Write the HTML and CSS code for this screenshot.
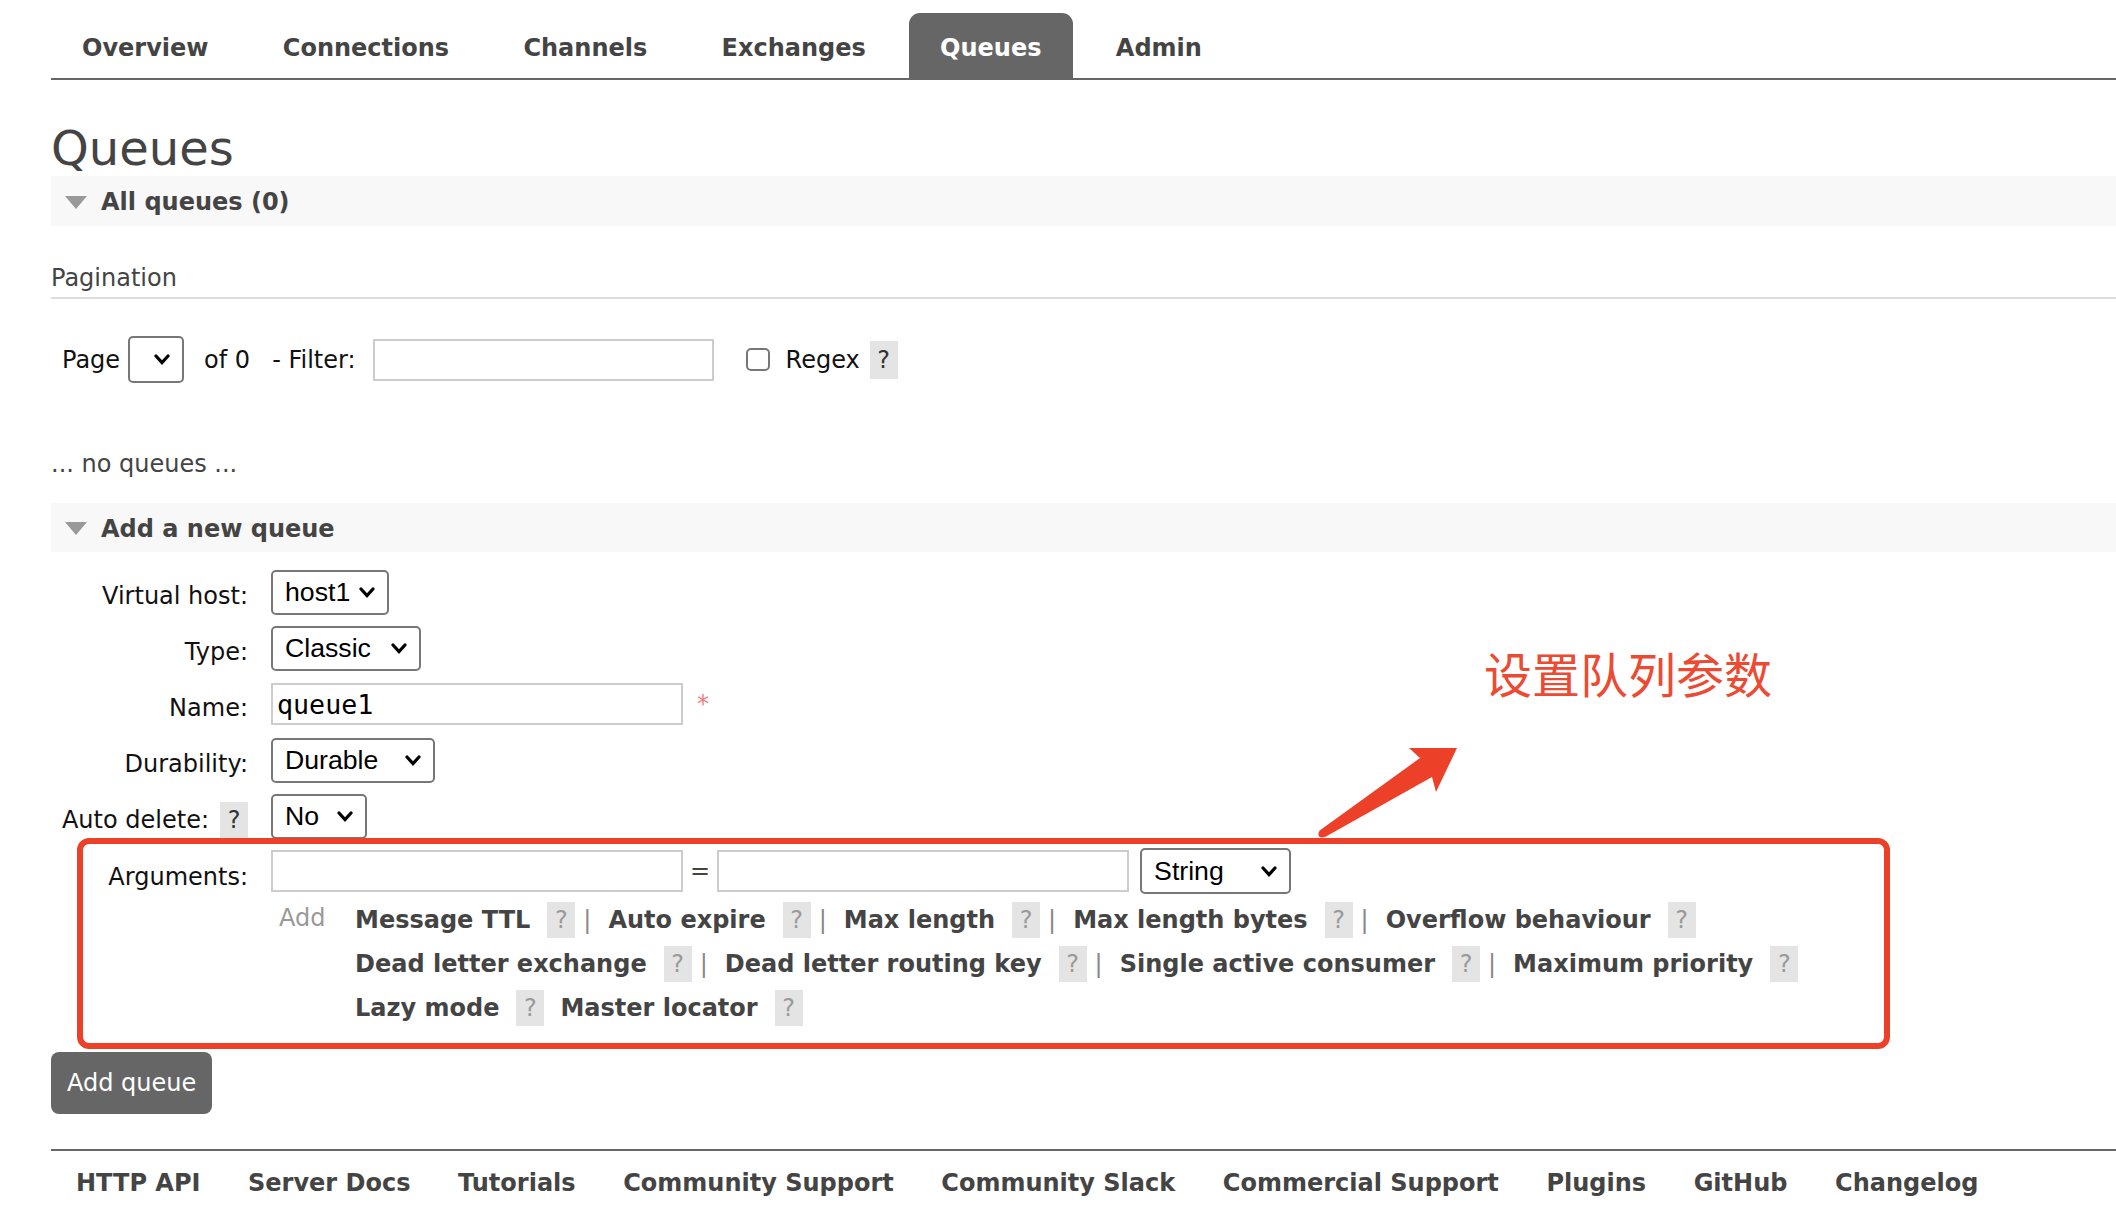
FILE: index.html
```html
<!DOCTYPE html>
<html lang="en">
<head>
<meta charset="utf-8">
<title>RabbitMQ Management - Queues</title>
<link rel="stylesheet" href="styles.css">
</head>
<body>
<div class="page">
  <nav class="menu">
    <ul>
      <li>Overview</li>
      <li>Connections</li>
      <li>Channels</li>
      <li>Exchanges</li>
      <li class="active">Queues</li>
      <li>Admin</li>
    </ul>
  </nav>

  <main class="main">
    <h1 class="title">Queues</h1>

    <section class="section">
      <h2 class="section-title"><span class="tri"></span>All queues (0)</h2>
      <h3 class="pag-title">Pagination</h3>
      <div class="pag-row">
        <span class="plain">Page</span>
        <span class="select w-page"><span class="sel-text"></span><svg class="chev" viewBox="0 0 16 11" width="16" height="11"><path d="M2 2 L8 8.6 L14 2" /></svg></span>
        <span class="plain of">of 0</span>
        <span class="plain filter">- Filter:</span>
        <span class="input w-filter"></span>
        <span class="checkbox"></span>
        <span class="plain regex">Regex</span>
        <span class="help dark">?</span>
      </div>
      <p class="empty">... no queues ...</p>
    </section>

    <section class="section">
      <h2 class="section-title second"><span class="tri"></span>Add a new queue</h2>
      <div class="form">
        <div class="row">
          <div class="label">Virtual host:</div>
          <span class="select w-host"><span class="sel-text">host1</span><svg class="chev" viewBox="0 0 16 11" width="16" height="11"><path d="M2 2 L8 8.6 L14 2" /></svg></span>
        </div>
        <div class="row">
          <div class="label">Type:</div>
          <span class="select w-type"><span class="sel-text">Classic</span><svg class="chev" viewBox="0 0 16 11" width="16" height="11"><path d="M2 2 L8 8.6 L14 2" /></svg></span>
        </div>
        <div class="row">
          <div class="label">Name:</div>
          <span class="input w-name"><span class="mono">queue1</span></span>
          <span class="req">*</span>
        </div>
        <div class="row">
          <div class="label">Durability:</div>
          <span class="select w-dur"><span class="sel-text">Durable</span><svg class="chev" viewBox="0 0 16 11" width="16" height="11"><path d="M2 2 L8 8.6 L14 2" /></svg></span>
        </div>
        <div class="row">
          <div class="label label-help">Auto delete: <span class="help dark">?</span></div>
          <span class="select w-no"><span class="sel-text">No</span><svg class="chev" viewBox="0 0 16 11" width="16" height="11"><path d="M2 2 L8 8.6 L14 2" /></svg></span>
        </div>
        <div class="row args">
          <div class="label">Arguments:</div>
          <div class="args-field">
            <div class="args-line">
              <span class="input w-arg"></span>
              <span class="eq">=</span>
              <span class="input w-arg"></span>
              <span class="select w-str"><span class="sel-text">String</span><svg class="chev" viewBox="0 0 16 11" width="16" height="11"><path d="M2 2 L8 8.6 L14 2" /></svg></span>
            </div>
            <div class="args-links">
              <div class="add">Add</div>
              <div class="link-lines">
                <div class="link-line">
                  <span class="link">Message TTL</span><span class="help">?</span><span class="sep">|</span>
                  <span class="link">Auto expire</span><span class="help">?</span><span class="sep">|</span>
                  <span class="link">Max length</span><span class="help">?</span><span class="sep">|</span>
                  <span class="link">Max length bytes</span><span class="help">?</span><span class="sep">|</span>
                  <span class="link">Overflow behaviour</span><span class="help">?</span>
                </div>
                <div class="link-line">
                  <span class="link">Dead letter exchange</span><span class="help">?</span><span class="sep">|</span>
                  <span class="link">Dead letter routing key</span><span class="help">?</span><span class="sep">|</span>
                  <span class="link">Single active consumer</span><span class="help">?</span><span class="sep">|</span>
                  <span class="link">Maximum priority</span><span class="help">?</span>
                </div>
                <div class="link-line">
                  <span class="link">Lazy mode</span><span class="help">?</span>
                  <span class="link next">Master locator</span><span class="help">?</span>
                </div>
              </div>
            </div>
          </div>
        </div>
      </div>
    </section>

    <button class="btn" type="button">Add queue</button>
  </main>

  <footer class="footer">
    <span>HTTP API</span>
    <span>Server Docs</span>
    <span>Tutorials</span>
    <span>Community Support</span>
    <span>Community Slack</span>
    <span>Commercial Support</span>
    <span>Plugins</span>
    <span>GitHub</span>
    <span>Changelog</span>
  </footer>

  <div class="annot-box"></div>
  <svg class="annot-arrow" viewBox="0 0 170 110" width="170" height="110">
    <polygon points="19,91 120,18 109,8 157,8 136,52 132,37 25,97" />
    <circle cx="22" cy="94" r="3.6" />
  </svg>
  <div class="annot-text">设置队列参数</div>
</div>
</body>
</html>
```

FILE: styles.css
```css
* { box-sizing: border-box; }

html, body {
  margin: 0;
  padding: 0;
  background: #fff;
}

body {
  font-family: "DejaVu Sans", Verdana, sans-serif;
  font-size: 24px;
  color: #444;
}

.page {
  position: relative;
  padding-left: 51px;
  min-height: 1222px;
  overflow: hidden;
}

/* ---------- top menu ---------- */
.menu {
  padding-top: 13px;
  border-bottom: 2px solid #666;
}
.menu ul {
  list-style: none;
  margin: 0;
  padding: 0;
  display: flex;
  gap: 12.3px;
}
.menu li {
  height: 65px;
  padding: 4px 31px 0 31px;
  line-height: 62px;
  font-weight: bold;
  color: #444;
  border-radius: 11px 11px 0 0;
}
.menu li.active {
  background: #666;
  color: #fff;
}

/* ---------- headings ---------- */
.title {
  margin: 40px 0 0;
  font-size: 48px;
  line-height: 56px;
  font-weight: normal;
  color: #444;
}

.section-title {
  margin: 0;
  height: 50px;
  display: flex;
  align-items: center;
  padding-left: 14px;
  padding-top: 2px;
  background: #f8f8f8;
  font-size: 24px;
  font-weight: bold;
  color: #444;
}
.section-title.second {
  margin-top: 24px;
  height: 49px;
}
.tri {
  width: 0;
  height: 0;
  border-left: 11px solid transparent;
  border-right: 11px solid transparent;
  border-top: 13px solid #999;
  margin-right: 14px;
}

.pag-title {
  margin: 37px 0 0;
  font-size: 24px;
  line-height: 30px;
  font-weight: normal;
  padding-bottom: 4px;
  border-bottom: 2px solid #ddd;
  color: #444;
}

/* ---------- pagination row ---------- */
.pag-row {
  margin-top: 37px;
  height: 47px;
  display: flex;
  align-items: center;
  padding-left: 11px;
  color: #111;
}
.pag-row .select { margin-left: 8px; height: 47px; }
.pag-row .of { margin-left: 20px; }
.pag-row .filter { margin-left: 22px; }
.pag-row .input { margin-left: 17px; }
.pag-row .checkbox { margin-left: 32px; }
.pag-row .regex { margin-left: 16px; }
.pag-row .help { margin-left: 10px; height: 38px; }

.empty {
  margin: 66px 0 0;
  line-height: 30px;
  color: #444;
}

/* ---------- controls ---------- */
.select {
  display: inline-flex;
  align-items: center;
  justify-content: space-between;
  height: 45px;
  padding: 0 12px 0 12px;
  border: 2px solid #777;
  border-radius: 5px;
  background: #fff;
  font-family: "Liberation Sans", Arial, sans-serif;
  font-size: 26.67px;
  color: #000;
}
.chev path {
  fill: none;
  stroke: #000;
  stroke-width: 3.2;
  stroke-linecap: round;
  stroke-linejoin: miter;
}
.w-page { width: 56px; }
.w-host { width: 118px; }
.w-type { width: 150px; }
.w-dur { width: 164px; }
.w-no { width: 96px; }
.w-str { width: 151px; height: 46px; }

.input {
  display: inline-flex;
  align-items: center;
  height: 42px;
  border: 2px solid #ccc;
  background: #fff;
  padding-left: 4px;
}
.w-filter { width: 341px; }
.w-name { width: 412px; }
.w-arg { width: 412px; }

.mono {
  font-family: "DejaVu Sans Mono", "Liberation Mono", monospace;
  font-size: 26.67px;
  color: #000;
}

.req {
  margin-left: 14px;
  margin-top: 0;
  color: #f08080;
  font-size: 24px;
}

.checkbox {
  display: inline-block;
  width: 24px;
  height: 23px;
  border: 2px solid #777;
  border-radius: 5px;
  background: #fff;
}

.help {
  display: inline-flex;
  align-items: center;
  justify-content: center;
  width: 28px;
  height: 36px;
  background: #e4e4e4;
  color: #9a9a9a;
  font-weight: normal;
}
.help.dark { color: #333; }

/* ---------- form ---------- */
.form {
  margin-top: 12px;
}
.row {
  display: flex;
  align-items: center;
  height: 56px;
}
.label {
  width: 197px;
  margin-right: 23px;
  text-align: right;
  padding-top: 7px;
  color: #111;
}
.label-help {
  display: flex;
  justify-content: flex-end;
  align-items: center;
  gap: 11px;
}

.row.args {
  height: auto;
  align-items: flex-start;
}
.row.args > .label {
  height: 54px;
  line-height: 54px;
  padding-top: 6px;
}
.args-line {
  height: 54px;
  display: flex;
  align-items: center;
}
.eq {
  margin: 0 7px;
  color: #444;
}
.args-line .select { margin-left: 11px; }

.args-links {
  display: flex;
}
.add {
  width: 84px;
  padding-left: 8px;
  height: 40px;
  line-height: 40px;
  color: #999;
}
.link-line {
  display: flex;
  align-items: center;
  height: 44px;
}
.link {
  font-weight: bold;
  color: #444;
}
.link + .help { margin-left: 17px; }
.sep {
  margin: 0 17px 0 8px;
  color: #888;
}
.help + .link.next { margin-left: 16px; }

/* ---------- button ---------- */
.btn {
  display: block;
  margin-top: 22px;
  height: 62px;
  padding: 0 16px;
  border: 0;
  border-radius: 8px;
  background: #666;
  color: #fff;
  font-family: "DejaVu Sans", Verdana, sans-serif;
  font-size: 24px;
}

/* ---------- footer ---------- */
.footer {
  margin-top: 35px;
  border-top: 2px solid #666;
  padding: 12px 0 0 25px;
  display: flex;
  gap: 47.6px;
  line-height: 40px;
  font-weight: bold;
  color: #444;
}

/* ---------- annotation overlay ---------- */
.annot-box {
  position: absolute;
  left: 77px;
  top: 838px;
  width: 1813px;
  height: 211px;
  border: 6px solid #ec4128;
  border-radius: 12px;
}
.annot-arrow {
  position: absolute;
  left: 1300px;
  top: 740px;
}
.annot-arrow polygon,
.annot-arrow circle {
  fill: #ec4128;
}
.annot-text {
  position: absolute;
  left: 1484px;
  top: 648px;
  font-family: "Noto Sans CJK SC", sans-serif;
  font-size: 48px;
  line-height: 48px;
  font-weight: 400;
  color: #ec4a32;
}
```
